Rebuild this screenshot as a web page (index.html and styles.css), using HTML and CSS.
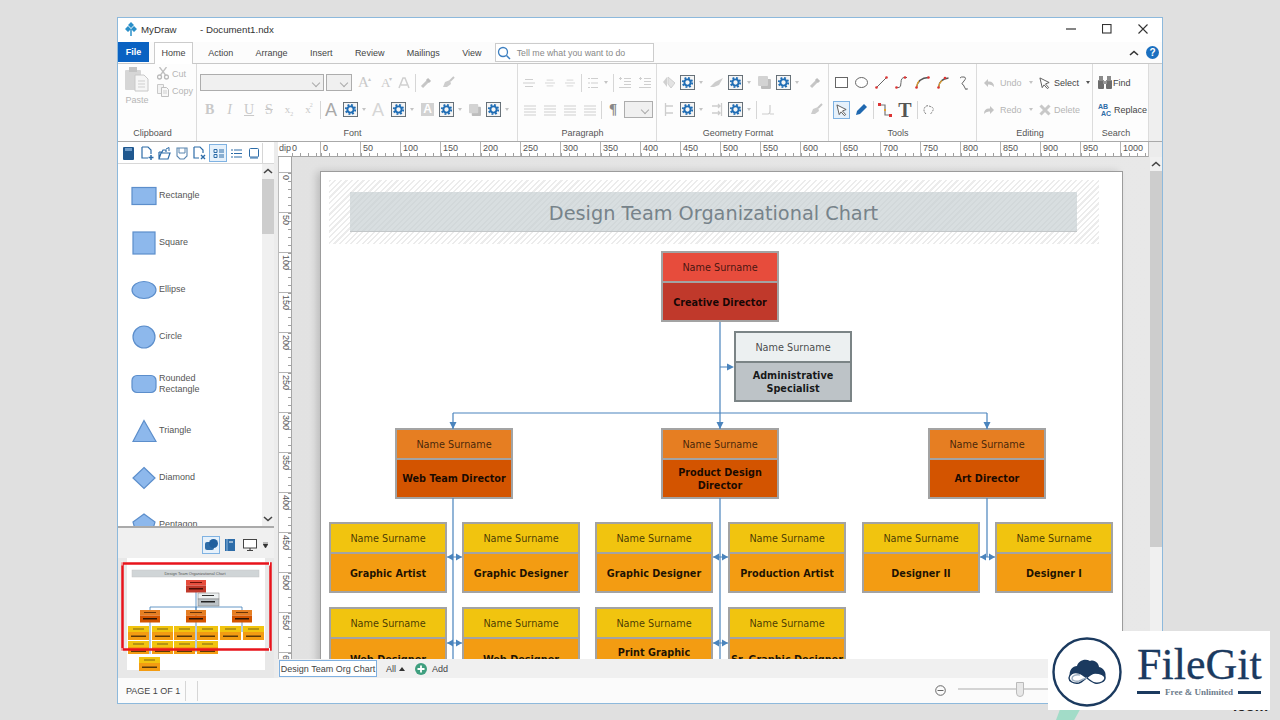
FILE: index.html
```html
<!DOCTYPE html>
<html lang="en">
<head>
<meta charset="utf-8">
<title>MyDraw - Document1.ndx</title>
<link rel="stylesheet" href="styles.css">
</head>
<body>
<svg class="defs" width="0" height="0" aria-hidden="true">
  <symbol id="gear" viewBox="0 0 16 16"><rect x=".5" y=".5" width="15" height="15" fill="#f5f5f5" stroke="#5f6a72"/><circle cx="8" cy="8" r="3.3" fill="none" stroke="#1f6db5" stroke-width="2"/><circle cx="8" cy="8" r="5" fill="none" stroke="#1f6db5" stroke-width="2" stroke-dasharray="2 1.93"/></symbol>
  <symbol id="dropper" viewBox="0 0 12 12"><path d="M2 10 8 4" stroke="#c6c6c6" stroke-width="3"/><path d="M7 2 10 5" stroke="#bdbdbd" stroke-width="3"/></symbol>
  <symbol id="brush" viewBox="0 0 13 13"><path d="M8 5 12 1" stroke="#c6c6c6" stroke-width="2"/><path d="M1 11 3 6 8 4 9 8 5 11Z" fill="#cdcdcd"/></symbol>
  <symbol id="lines3" viewBox="0 0 12 12"><path d="M0 2h12M0 5h12M0 8h12M0 11h12" stroke="#cfcfcf" stroke-width="1"/></symbol>
  <symbol id="lines2" viewBox="0 0 12 10"><path d="M2 1.5h8M0 5h12M2 8.500h8" stroke="#cfcfcf"/></symbol>
  <symbol id="indent" viewBox="0 0 12 12"><path d="M5 1.500h7M5 4.500h7M5 7.500h7M0 10.500h12M0 1.500h3M1.500 0v3" stroke="#cfcfcf"/></symbol>
  <symbol id="sq" viewBox="0 0 13 13"><rect x="3" y="3" width="10" height="10" rx="1" fill="#bdbdbd"/><rect width="10" height="10" rx="1" fill="#d3d3d3"/></symbol>
  <symbol id="ptr" viewBox="0 0 13 13"><path d="M1 1 11 6 7 7.500 10.500 11.500 9 12.500 5.500 8.500 3.500 11.500Z" fill="#fff" stroke="#555"/></symbol>
</svg>

<div class="window">
  <header class="titlebar">
    <svg class="app-logo" width="12" height="14" viewBox="0 0 12 14"><path d="M6 0 9 3 6 6 3 3ZM3 4 6 7 3 10 0 7ZM9 4 12 7 9 10 6 7Z" fill="#2a8fc9"/><path d="M6 7v7" stroke="#2a8fc9" stroke-width="1.500"/></svg>
    <span class="app-name">MyDraw</span>
    <span class="doc-name">- Document1.ndx</span>
    <div class="win-ctrls">
      <svg width="10" height="10" viewBox="0 0 10 10"><path d="M0 5h10" stroke="#333" stroke-width="1.200"/></svg>
      <svg width="10" height="10" viewBox="0 0 10 10"><rect x=".5" y=".5" width="8.500" height="8.500" fill="none" stroke="#333" stroke-width="1.100"/></svg>
      <svg width="10" height="10" viewBox="0 0 10 10"><path d="M.5.500 9.500 9.500M9.500.5.500 9.500" stroke="#333" stroke-width="1.100"/></svg>
    </div>
  </header>

  <nav class="tabs">
    <span class="file-tab">File</span>
    <span class="tab tab-home">Home</span>
    <span class="tab">Action</span>
    <span class="tab">Arrange</span>
    <span class="tab">Insert</span>
    <span class="tab">Review</span>
    <span class="tab">Mailings</span>
    <span class="tab">View</span>
    <div class="tellme">
      <svg width="14" height="14" viewBox="0 0 14 14"><circle cx="6" cy="6" r="4.500" fill="none" stroke="#3d7fc0" stroke-width="1.300"/><path d="M9.500 9.500 13 13" stroke="#3d7fc0" stroke-width="1.500"/></svg>
      <span>Tell me what you want to do</span>
    </div>
    <div class="tabs-right">
      <svg width="10" height="6" viewBox="0 0 10 6"><path d="M1 5 5 1.500 9 5" fill="none" stroke="#333" stroke-width="1.600"/></svg>
      <span class="help">?</span>
    </div>
  </nav>

  <section class="ribbon">
    <div class="group g-clip">
      <div class="group-body clip-body">
        <div class="paste">
          <svg width="24" height="25" viewBox="0 0 24 25"><rect x="0" y="3" width="16" height="20" rx="1" fill="#d6d6d6"/><rect x="4" y="0" width="8" height="5" fill="#c4c4c4"/><path d="M10 8h9l4 4v12H10Z" fill="#f6f6f6" stroke="#c8c8c8"/><path d="M13 14h7M13 17h7M13 20h7" stroke="#cfcfcf"/></svg>
          <span>Paste</span>
        </div>
        <div class="clip-side">
          <div class="clip-row"><svg width="12" height="13" viewBox="0 0 12 13"><circle cx="2.500" cy="10" r="2" fill="none" stroke="#b9b9b9" stroke-width="1.300"/><circle cx="9.500" cy="10" r="2" fill="none" stroke="#b9b9b9" stroke-width="1.300"/><path d="M3.500 8 9.500 0M8.500 8 2.500 0" stroke="#bfbfbf" stroke-width="1.300"/></svg><span>Cut</span></div>
          <div class="clip-row"><svg width="12" height="13" viewBox="0 0 12 13"><path d="M.5.500h6v9h-6Z" fill="#f3f3f3" stroke="#c9c9c9"/><path d="M4.500 3.500h5l2 2v7h-7Z" fill="#f8f8f8" stroke="#c0c0c0"/><path d="M6 7h4M6 9h4" stroke="#cfcfcf"/></svg><span>Copy</span></div>
        </div>
      </div>
      <div class="group-label">Clipboard</div>
    </div>

    <div class="group g-font">
      <div class="group-body">
        <div class="row pad3">
          <span class="combo w124"></span><span class="combo w26 ml2"></span>
          <span class="glyph a-g ml6">A<sup>▴</sup></span>
          <span class="glyph a-s ml11">A<sup>▾</sup></span>
          <svg class="ml5" width="12" height="12" viewBox="0 0 12 12"><path d="M1 11 5 1h2l4 10M3 8h6" fill="none" stroke="#cfcfcf" stroke-width="1.500"/></svg>
          <span class="sep ml5"></span>
          <svg class="ml4" width="12" height="12"><use href="#dropper"/></svg>
          <svg class="ml10" width="13" height="13"><use href="#brush"/></svg>
        </div>
        <div class="row pad3">
          <b class="glyph fmt w9 ml5">B</b>
          <i class="glyph fmt w7 ml12">I</i>
          <u class="glyph fmt w9 ml11">U</u>
          <s class="glyph fmt w10 ml11">S</s>
          <span class="glyph fmt-x w10 ml10">x<sub>2</sub></span>
          <span class="glyph fmt-x w10 ml10">x<sup>2</sup></span>
          <span class="sep ml6"></span>
          <span class="glyph big-a w12 ml4">A</span>
          <svg class="ml6" width="15" height="15"><use href="#gear"/></svg><span class="caret ml4"></span>
          <span class="glyph big-a pale w12 ml6">A</span>
          <svg class="ml7" width="15" height="15"><use href="#gear"/></svg><span class="caret ml4"></span>
          <span class="glyph boxed-a w13 ml7">A</span>
          <svg class="ml5" width="15" height="15"><use href="#gear"/></svg><span class="caret ml4"></span>
          <svg class="ml7" width="12" height="12"><use href="#sq"/></svg>
          <svg class="ml5" width="15" height="15"><use href="#gear"/></svg><span class="caret ml4"></span>
        </div>
      </div>
      <div class="group-label">Font</div>
    </div>

    <div class="group g-para">
      <div class="group-body">
        <div class="row pad5">
          <svg width="12" height="10"><use href="#lines2"/></svg>
          <svg class="ml10" width="10" height="10"><use href="#lines2"/></svg>
          <svg class="ml10" width="10" height="10"><use href="#lines2"/></svg>
          <span class="sep ml6"></span>
          <svg class="ml6" width="10" height="12" viewBox="0 0 10 12"><path d="M3 1.500h7M3 6h7M3 10.500h7M0 1.500h2M0 6h2M0 10.500h2" stroke="#cfcfcf"/></svg>
          <span class="caret ml6"></span>
          <span class="sep ml5"></span>
          <svg class="ml5" width="12" height="12"><use href="#indent"/></svg>
          <svg class="ml8" width="12" height="12"><use href="#indent"/></svg>
        </div>
        <div class="row pad5">
          <svg class="ml1" width="12" height="12"><use href="#lines3"/></svg>
          <svg class="ml8" width="12" height="12"><use href="#lines3"/></svg>
          <svg class="ml8" width="12" height="12"><use href="#lines3"/></svg>
          <svg class="ml8" width="12" height="12"><use href="#lines3"/></svg>
          <span class="sep ml5"></span>
          <b class="glyph pilcrow w8 ml7">¶</b>
          <span class="combo w29 ml7"></span>
        </div>
      </div>
      <div class="group-label">Paragraph</div>
    </div>

    <div class="group g-geom">
      <div class="group-body">
        <div class="row pad6">
          <svg width="12" height="13" viewBox="0 0 12 13"><path d="M4 1 0 6 4 11Z" fill="#d0d0d0"/><path d="M5 1 12 7 8 12 5 8Z" fill="#e3e3e3" stroke="#cfcfcf"/></svg>
          <svg class="ml5" width="15" height="15"><use href="#gear"/></svg><span class="caret ml4"></span>
          <svg class="ml7" width="13" height="12" viewBox="0 0 13 12"><path d="M0 10 5 5 13 1 9 8 4 10Z" fill="#cdcdcd"/></svg>
          <svg class="ml5" width="15" height="15"><use href="#gear"/></svg><span class="caret ml4"></span>
          <svg class="ml7" width="13" height="13"><use href="#sq"/></svg>
          <svg class="ml5" width="15" height="15"><use href="#gear"/></svg><span class="caret ml4"></span>
          <svg class="ml10" width="12" height="12"><use href="#dropper"/></svg>
        </div>
        <div class="row pad6">
          <svg class="ml1" width="11" height="13" viewBox="0 0 11 13"><path d="M1.500 0v13M1.500 3H9M1.500 10H9" stroke="#cdcdcd" stroke-width="1.300"/></svg>
          <svg class="ml5" width="15" height="15"><use href="#gear"/></svg><span class="caret ml4"></span>
          <svg class="ml9" width="11" height="13" viewBox="0 0 11 13"><path d="M9.500 0v13M0 3h8M0 10h8M6 1l2 2-2 2M6 8l2 2-2 2" fill="none" stroke="#cdcdcd" stroke-width="1.300"/></svg>
          <svg class="ml5" width="15" height="15"><use href="#gear"/></svg><span class="caret ml4"></span>
          <span class="sep ml5"></span>
          <svg class="ml5" width="12" height="12" viewBox="0 0 12 12"><path d="M0 10h6Q8 10 8 7V1M8 10h4" fill="none" stroke="#cdcdcd" stroke-width="1.200"/></svg>
          <svg class="ml36" width="13" height="13"><use href="#brush"/></svg>
        </div>
      </div>
      <div class="group-label">Geometry Format</div>
    </div>

    <div class="group g-tools">
      <div class="group-body">
        <div class="row pad6">
          <svg width="13" height="11" viewBox="0 0 13 11"><rect x=".5" y=".5" width="12" height="10" fill="#fff" stroke="#666"/></svg>
          <svg class="ml7" width="13" height="11" viewBox="0 0 13 11"><ellipse cx="6.500" cy="5.500" rx="6" ry="5" fill="#fff" stroke="#666"/></svg>
          <svg class="ml7" width="13" height="13" viewBox="0 0 13 13"><path d="M1.500 11.500 11.500 1.500" stroke="#666"/><circle cx="1.500" cy="11.500" r="1.300" fill="#d33"/><circle cx="11.500" cy="1.500" r="1.300" fill="#d33"/></svg>
          <svg class="ml7" width="13" height="13" viewBox="0 0 13 13"><path d="M1.500 11.500H4Q6 11.500 6 6.500T9.500 1.500H12" fill="none" stroke="#666"/><circle cx="1.500" cy="11.500" r="1.300" fill="#d33"/><circle cx="10" cy="1.500" r="1.300" fill="#d33"/></svg>
          <svg class="ml7" width="15" height="13" viewBox="0 0 15 13"><path d="M1.500 11.500Q3 2 13.500 1.500" fill="none" stroke="#555" stroke-width="1.300"/><path d="M1.500 11.500Q2 7 4 5" fill="none" stroke="#e0a030" stroke-width="1.300"/><circle cx="1.500" cy="11.500" r="1.300" fill="#d33"/><circle cx="13.500" cy="1.500" r="1.300" fill="#d33"/></svg>
          <svg class="ml7" width="13" height="13" viewBox="0 0 13 13"><path d="M1.500 11.500Q2 3 11.500 2" fill="none" stroke="#555" stroke-width="1.300"/><path d="M1.500 11.500Q2 7 5 4.500" fill="none" stroke="#e0a030" stroke-width="1.300"/><circle cx="1.500" cy="11.500" r="1.300" fill="#d33"/><circle cx="8" cy="2" r="1.300" fill="#d33"/></svg>
          <svg class="ml9" width="9" height="14" viewBox="0 0 9 14"><path d="M1 2Q2 .5 5 1T5 5 3 8 6 12 8 12" fill="none" stroke="#666"/></svg>
        </div>
        <div class="row pad4">
          <span class="selbox w17"><svg width="12" height="12"><use href="#ptr"/></svg></span>
          <svg class="ml5" width="13" height="13" viewBox="0 0 13 13"><path d="M1 12 2 8 9 1 12 4 5 11Z" fill="#1f68b0"/></svg>
          <span class="sep ml5"></span>
          <svg class="ml4" width="14" height="14" viewBox="0 0 14 14"><path d="M2 2H7V12H12" fill="none" stroke="#777" stroke-width="1.200"/><rect x="0" y="0" width="3" height="3" fill="#d33"/><rect x="11" y="11" width="3" height="3" fill="#d33"/><rect x="6" y="6" width="2" height="2" fill="#e0a030"/></svg>
          <span class="glyph big-t w14 ml6">T</span>
          <span class="sep ml5"></span>
          <svg class="ml5" width="11" height="10" viewBox="0 0 11 10"><path d="M3 9Q0 6 1.500 3T6 1 10 3 9 7 7 9" fill="none" stroke="#777" stroke-dasharray="2 1"/></svg>
        </div>
      </div>
      <div class="group-label">Tools</div>
    </div>

    <div class="group g-edit">
      <div class="group-body">
        <div class="row pad6">
          <svg width="12" height="10" viewBox="0 0 12 10"><path d="M1 5 5 1V3.500Q11 3 11 9 9 6 5 6.500V9Z" fill="#c4c4c4"/></svg>
          <span class="ed-label pale-text ml5">Undo</span><span class="caret"></span>
          <svg class="ml6" width="12" height="12"><use href="#ptr"/></svg>
          <span class="ed-select ml3">Select</span><span class="caret dark ml5"></span>
        </div>
        <div class="row pad6">
          <svg width="12" height="10" viewBox="0 0 12 10"><path d="M11 5 7 1V3.500Q1 3 1 9 3 6 7 6.500V9Z" fill="#c4c4c4"/></svg>
          <span class="ed-label pale-text ml5">Redo</span><span class="caret"></span>
          <svg class="ml6" width="12" height="12" viewBox="0 0 12 12"><path d="M1.500 1.500 10.500 10.500M10.500 1.500 1.500 10.500" stroke="#c8c8c8" stroke-width="3"/></svg>
          <span class="ed-select pale-text ml3">Delete</span>
        </div>
      </div>
      <div class="group-label">Editing</div>
    </div>

    <div class="group g-search">
      <div class="group-body">
        <div class="row pad5">
          <svg width="14" height="13" viewBox="0 0 14 13"><rect x="0" y="4" width="6" height="9" rx="1" fill="#6d6d6d"/><rect x="8" y="4" width="6" height="9" rx="1" fill="#6d6d6d"/><rect x="1" y="0" width="4" height="5" fill="#8a8a8a"/><rect x="9" y="0" width="4" height="5" fill="#8a8a8a"/><rect x="5" y="5" width="4" height="3" fill="#999"/></svg>
          <span class="ml1 search-t">Find</span>
        </div>
        <div class="row pad5">
          <span class="abac"><span>AB</span><span class="abac2">AC</span></span>
          <span class="ml2 search-t">Replace</span>
        </div>
      </div>
      <div class="group-label">Search</div>
    </div>
    <div class="ribbon-end"></div>
  </section>

  <main class="body">
    <aside class="left">
      <div class="left-tools">
        <svg width="11" height="13" viewBox="0 0 11 13"><rect width="11" height="13" rx="1" fill="#20588f"/><rect x="2" y="1" width="7" height="3" fill="#6f9cc8"/></svg>
        <svg class="ml7" width="13" height="14" viewBox="0 0 13 14"><path d="M1 1h6l3 3v4M1 1v11h6" fill="none" stroke="#2d6ca8" stroke-width="1.200"/><path d="M10 9v5M7.500 11.500h5" stroke="#2d6ca8" stroke-width="1.500"/></svg>
        <svg class="ml4" width="13" height="13" viewBox="0 0 13 13"><path d="M1 5V12H10L12 6H3L1 12M1 5H4L5 3H8V5" fill="none" stroke="#2d6ca8" stroke-width="1.200"/><path d="M8 2 11 .5V4" fill="none" stroke="#2d6ca8"/></svg>
        <svg class="ml5" width="12" height="13" viewBox="0 0 12 13"><path d="M1 1h10v8l-3 3H4L1 9Z" fill="none" stroke="#5a86b0" stroke-width="1.100"/><path d="M3 1v5h6V1" fill="none" stroke="#5a86b0"/></svg>
        <svg class="ml5" width="13" height="14" viewBox="0 0 13 14"><path d="M1 1h6l3 3v3M1 1v11h5" fill="none" stroke="#2d6ca8" stroke-width="1.200"/><path d="M8 9l4 4M12 9l-4 4" stroke="#2d6ca8" stroke-width="1.400"/></svg>
        <span class="selbox w18 ml3"><svg width="11" height="11" viewBox="0 0 11 11"><path d="M1 1.500h3v3H1ZM1 6.500h3v3H1Z" fill="none" stroke="#2d6ca8"/><path d="M6 2h5M6 4h5M6 7h5M6 9h5" stroke="#2d6ca8"/></svg></span>
        <svg class="ml4" width="11" height="9" viewBox="0 0 11 9"><path d="M3 1h8M3 4.500h8M3 8h8M0 1h2M0 4.500h2M0 8h2" stroke="#2d6ca8"/></svg>
        <svg class="ml7" width="10" height="11" viewBox="0 0 10 11"><rect x=".5" y=".5" width="9" height="8.500" rx="1" fill="none" stroke="#2d6ca8"/><path d="M1 10h8" stroke="#2d6ca8"/></svg>
        <span class="sep ml3 tall"></span>
      </div>
      <div class="shapes">
        <ul class="shape-list">
          <li><svg width="26" height="24" viewBox="0 0 26 24"><rect x="1" y="3.500" width="24" height="17" class="shape"/></svg><span>Rectangle</span></li>
          <li><svg width="26" height="24" viewBox="0 0 26 24"><rect x="2" y="1" width="22" height="22" class="shape"/></svg><span>Square</span></li>
          <li><svg width="26" height="24" viewBox="0 0 26 24"><ellipse cx="13" cy="12" rx="12" ry="8.500" class="shape"/></svg><span>Ellipse</span></li>
          <li><svg width="26" height="24" viewBox="0 0 26 24"><circle cx="13" cy="12" r="11" class="shape"/></svg><span>Circle</span></li>
          <li><svg width="26" height="24" viewBox="0 0 26 24"><rect x="1" y="3.500" width="24" height="17" rx="5" class="shape"/></svg><span>Rounded<br>Rectangle</span></li>
          <li><svg width="26" height="24" viewBox="0 0 26 24"><path d="M13 1.500 25 22.500H2Z" class="shape"/></svg><span>Triangle</span></li>
          <li><svg width="26" height="24" viewBox="0 0 26 24"><path d="M13 1.500 24 12 13 22.500 2 12Z" class="shape"/></svg><span>Diamond</span></li>
          <li><svg width="26" height="24" viewBox="0 0 26 24"><path d="M13 1 24 9 20 23H6L2 9Z" class="shape"/></svg><span>Pentagon</span></li>
        </ul>
        <div class="sb-v">
          <svg width="10" height="6" viewBox="0 0 10 6"><path d="M1 5 5 1.500 9 5" fill="none" stroke="#444" stroke-width="1.600"/></svg>
          <div class="sb-thumb"></div>
          <svg class="sb-down" width="10" height="6" viewBox="0 0 10 6"><path d="M1 1 5 4.500 9 1" fill="none" stroke="#444" stroke-width="1.600"/></svg>
        </div>
      </div>
      <div class="nav-tools">
        <span class="selbox w18"><svg width="13" height="12" viewBox="0 0 13 12"><rect x="0" y="3" width="9" height="8" rx="2" fill="#2d6ca8"/><circle cx="8.500" cy="4.500" r="4.500" fill="#1f5f9e"/></svg></span>
        <svg class="ml5" width="10" height="12" viewBox="0 0 10 12"><rect width="10" height="12" fill="#2d6ca8"/><path d="M2 0v12" stroke="#8db8e0"/><path d="M4 3h4" stroke="#fff"/></svg>
        <svg class="ml8" width="14" height="12" viewBox="0 0 14 12"><rect x=".5" y=".5" width="13" height="8.500" fill="#fff" stroke="#444"/><path d="M7 9v2M4 11.500h6" stroke="#444" stroke-width="1.200"/></svg>
        <svg class="ml6" width="5" height="6" viewBox="0 0 5 6"><path d="M0 0h5M0 2h5L2.500 6Z" fill="#333" stroke="#333" stroke-width=".6"/></svg>
      </div>
      <svg class="thumb" width="156" height="120" viewBox="118 558 156 120">
        <defs>
          <g id="mn-y"><rect width="21" height="6" fill="#f1c40f"/><rect y="6" width="21" height="8" fill="#f39c12"/><rect x="5" y="2.500" width="11" height="1" fill="#7a6516"/><rect x="3" y="9.500" width="15" height="1.500" fill="#5a3808"/></g>
          <g id="mn-o"><rect width="20" height="5.500" fill="#e67e22"/><rect y="5.500" width="20" height="7" fill="#d35400"/><rect x="4" y="2" width="12" height="1" fill="#6a3508"/><rect x="3" y="8" width="14" height="1.500" fill="#2d1405"/></g>
        </defs>
        <rect x="127" y="558" width="138" height="112" fill="#fff"/>
        <rect x="132" y="570" width="127" height="7" fill="#d0d5d7" stroke="#c5c5c5" stroke-width=".5"/>
        <text x="195" y="575" class="mini-title" text-anchor="middle">Design Team Organizational Chart</text>
        <path d="M196 592V620M150 607H242V610M150 607V610M196 607V610M150 622V657M196 622V652M242 622V632" fill="none" stroke="#3f7fb8" stroke-width=".8"/>
        <rect x="186" y="580" width="20" height="5.500" fill="#e74c3c"/><rect x="186" y="585.500" width="20" height="7" fill="#c0392b"/><rect x="190" y="582" width="12" height="1" fill="#6b1208"/><rect x="189" y="588" width="14" height="1.500" fill="#4a0d05"/>
        <rect x="198" y="593" width="21" height="6" fill="#ecf0f1" stroke="#777" stroke-width=".5"/><rect x="198" y="599" width="21" height="7" fill="#bdc3c7" stroke="#777" stroke-width=".5"/><rect x="202" y="595" width="12" height="1" fill="#333"/><rect x="201" y="601" width="14" height="1.500" fill="#222"/>
        <use href="#mn-o" x="140" y="610"/><use href="#mn-o" x="186" y="610"/><use href="#mn-o" x="232" y="610"/>
        <use href="#mn-y" x="128" y="626"/><use href="#mn-y" x="152" y="626"/><use href="#mn-y" x="174" y="626"/><use href="#mn-y" x="197" y="626"/><use href="#mn-y" x="220" y="626"/><use href="#mn-y" x="243" y="626"/>
        <use href="#mn-y" x="128" y="641"/><use href="#mn-y" x="152" y="641"/><use href="#mn-y" x="174" y="641"/><use href="#mn-y" x="197" y="641"/>
        <use href="#mn-y" x="139" y="657"/>
        <rect x="127" y="654" width="138" height="3" fill="#fff"/>
        <rect x="122.500" y="563.500" width="148" height="86" fill="none" stroke="#e8141c" stroke-width="2.500"/>
        <path d="M122 561.500v4M269.500 561.500v4M122 648v4M269.500 648v4" stroke="#fff" stroke-width="1"/>
      </svg>
    </aside>

    <div class="right">
      <div class="hruler">
        <span class="dip">dip</span>
        <div class="hcells">
          <span class="hfirst">0</span><span>0</span><span>50</span><span>100</span><span>150</span><span>200</span><span>250</span><span>300</span><span>350</span><span>400</span><span>450</span><span>500</span><span>550</span><span>600</span><span>650</span><span>700</span><span>750</span><span>800</span><span>850</span><span>900</span><span>950</span><span>1000</span>
        </div>
      </div>
      <div class="mid">
        <div class="vruler">
          <span class="vfirst"></span><span>0</span><span>50</span><span>100</span><span>150</span><span>200</span><span>250</span><span>300</span><span>350</span><span>400</span><span>450</span><span>500</span><span>550</span><span>600</span>
        </div>
        <div class="canvas">
          <div class="page">
            <div class="banner"><div class="banner-in">Design Team Organizational Chart</div></div>

            <svg class="wires" width="802" height="520" viewBox="0 0 802 520">
              <path d="M399 150V257M399 195H411M132 241H666M132 241V257M666 241V257M132 326V500M399 326V500M666 326V385M126 385H141M392 385H407M659 385H674M126 471H141M392 471H407" fill="none" stroke="#4a84bd" stroke-width="1.200"/>
              <path d="M399 257l-3.500-7h7ZM132 257l-3.500-7h7ZM666 257l-3.500-7h7ZM413 195l-7-3.500v7ZM126 385l6-3.500v7ZM141 385l-6-3.500v7ZM392 385l6-3.500v7ZM407 385l-6-3.500v7ZM659 385l6-3.500v7ZM674 385l-6-3.500v7ZM126 471l6-3.500v7ZM141 471l-6-3.500v7ZM392 471l6-3.500v7ZM407 471l-6-3.500v7Z" fill="#4a84bd"/>
            </svg>

            <div class="node red n1"><div class="nh">Name Surname</div><div class="nb">Creative Director</div></div>
            <div class="node grey n2"><div class="nh">Name Surname</div><div class="nb">Administrative<br>Specialist</div></div>

            <div class="node orange d1"><div class="nh">Name Surname</div><div class="nb">Web Team Director</div></div>
            <div class="node orange d2"><div class="nh">Name Surname</div><div class="nb">Product Design<br>Director</div></div>
            <div class="node orange d3"><div class="nh">Name Surname</div><div class="nb">Art Director</div></div>

            <div class="node yellow r1 c1"><div class="nh">Name Surname</div><div class="nb">Graphic Artist</div></div>
            <div class="node yellow r1 c2"><div class="nh">Name Surname</div><div class="nb">Graphic Designer</div></div>
            <div class="node yellow r1 c3"><div class="nh">Name Surname</div><div class="nb">Graphic Designer</div></div>
            <div class="node yellow r1 c4"><div class="nh">Name Surname</div><div class="nb">Production Artist</div></div>
            <div class="node yellow r1 c5"><div class="nh">Name Surname</div><div class="nb">Designer II</div></div>
            <div class="node yellow r1 c6"><div class="nh">Name Surname</div><div class="nb">Designer I</div></div>

            <div class="node yellow r2 c1"><div class="nh">Name Surname</div><div class="nb">Web Designer</div></div>
            <div class="node yellow r2 c2"><div class="nh">Name Surname</div><div class="nb">Web Designer</div></div>
            <div class="node yellow r2 c3"><div class="nh">Name Surname</div><div class="nb">Print Graphic<br>Designer</div></div>
            <div class="node yellow r2 c4"><div class="nh">Name Surname</div><div class="nb">Sr. Graphic Designer</div></div>
          </div>
        </div>
        <div class="sb-main">
          <svg width="10" height="6" viewBox="0 0 10 6"><path d="M1 5 5 1.500 9 5" fill="none" stroke="#444" stroke-width="1.600"/></svg>
          <div class="sb-main-thumb"></div>
        </div>
      </div>
      <div class="sheet-tabs">
        <span class="sheet">Design Team Org Chart</span>
        <span class="all">All</span><span class="caret up"></span>
        <svg class="add-ico" width="12" height="12" viewBox="0 0 12 12"><circle cx="6" cy="6" r="6" fill="#3f9f7f"/><path d="M6 2.500v7M2.500 6h7" stroke="#fff" stroke-width="1.800"/></svg>
        <span class="add">Add</span>
      </div>
    </div>
  </main>

  <footer class="status">
    <span class="page-of">PAGE 1 OF 1</span>
    <span class="sep tall ml5"></span>
    <span class="sep tall ml11"></span>
    <svg class="zoom-minus" width="11" height="11" viewBox="0 0 11 11"><circle cx="5.500" cy="5.500" r="4.800" fill="none" stroke="#666"/><path d="M2.500 5.500h6" stroke="#666"/></svg>
    <div class="slider"><span class="slider-thumb"></span></div>
  </footer>
</div>

<div class="peek-green"></div>
<span class="peek-text">.com</span>
<div class="filegit">
  <svg width="76" height="76" viewBox="0 0 76 76">
    <circle cx="38" cy="38" r="33.500" fill="#fff" stroke="#1b3a5f" stroke-width="2.400"/>
    <g class="fg-icon">
      <path d="M21 46C19 38 24 34 28 34 29 29 36 26 41 29 46 27 50 32 50 35 55 36 58 41 56 47Z" fill="#1b3a5f"/>
      <path d="M30 41C24 39 20 43 20 46S24 52 30 51C34 50 41 41 46 41S56 43 56 46 51 52 46 51C41 50 35 42 30 41Z" fill="#fff" stroke="#1b3a5f" stroke-width="1.400"/>
      <path d="M31 43C27 42 23 44 23 46.500S27 49.500 30 49C33 48 36 46 38 46" fill="none" stroke="#9fb0c2" stroke-width="1.500"/>
    </g>
  </svg>
  <div class="fg-text">
    <div class="fg-name">FileGit</div>
    <div class="fg-sub"><span class="fg-bar"></span><span>Free &amp; Unlimited</span><span class="fg-bar"></span></div>
  </div>
</div>
</body>
</html>
```
FILE: styles.css
```css
* { box-sizing: border-box; }
html, body { margin: 0; height: 100%; }
body {
  position: relative;
  width: 1280px;
  height: 720px;
  overflow: hidden;
  padding: 17px 0 0 117px;
  background: #e0e0e0;
  font: 9px "Liberation Sans", Arial, sans-serif;
  color: #444;
}
.defs { position: absolute; }
svg { display: block; flex: none; }

.window {
  width: 1046px;
  height: 687px;
  border: 1px solid #8db9dc;
  background: #fff;
  display: flex;
  flex-direction: column;
}

/* title bar */
.titlebar { height: 24px; display: flex; align-items: center; padding: 0 0 2px 7px; background: #fff; color: #333; font-size: 9.700px; }
.app-name { margin-left: 4px; width: 59px; }
.win-ctrls { margin-left: auto; display: flex; align-items: center; gap: 26px; padding-right: 14px; }

/* tabs */
.tabs { height: 22px; display: flex; align-items: flex-end; position: relative; border-bottom: 1px solid #c8c8c8; background: #fcfcfc; color: #444; }
.file-tab { width: 31px; height: 20px; margin-bottom: 1px; background: #0a62c2; color: #fff; font-weight: 700; display: flex; align-items: center; justify-content: center; }
.tab { padding: 0 11.200px 1px; height: 20px; display: flex; align-items: center; }
.tab-home { margin: 0 4px -1px 5px; padding: 0 8px 2px; width: 39px; height: 22px; justify-content: center; background: #fff; border: 1px solid #ccc; border-bottom: 0; }
.tellme { margin: 0 0 1px 2px; width: 159px; height: 19px; border: 1px solid #ccc; display: flex; align-items: center; gap: 6px; padding-left: 1px; color: #888; background: #fff; font-size: 8.800px; }
.tabs-right { margin-left: auto; display: flex; align-items: center; gap: 7px; height: 21px; padding-right: 3px; }
.help { width: 13px; height: 13px; border-radius: 50%; background: #1a6fc0; color: #fff; font-weight: 700; font-size: 10px; display: flex; align-items: center; justify-content: center; }

/* ribbon */
.ribbon { height: 78px; display: flex; border-bottom: 1px solid #a9a9a9; background: #fdfdfd; }
.group { display: flex; flex-direction: column; border-right: 1px solid #dcdcdc; }
.g-clip { width: 79px; } .g-font { width: 321px; } .g-para { width: 139px; } .g-geom { width: 172px; }
.g-tools { width: 148px; } .g-edit { width: 116px; } .g-search { width: 56px; }
.ribbon-end { flex: 1; background: #efefef; }
.group-body { height: 63px; padding-top: 5px; }
.group-label { text-align: center; color: #555; line-height: 12px; padding-right: 9px; }
.row { height: 27px; display: flex; align-items: center; }
.pad3 { padding-left: 3px; } .pad4 { padding-left: 4px; } .pad5 { padding-left: 5px; } .pad6 { padding-left: 6px; }
.sep { width: 1px; height: 18px; background: #d6d6d6; flex: none; }
.sep.tall { height: 20px; }
.caret { width: 0; height: 0; border: 2.500px solid transparent; border-top: 3px solid #c4c4c4; border-bottom: 0; flex: none; }
.caret.dark { border-top-color: #555; }
.caret.up { border-top: 0; border-bottom: 4px solid #333; border-left-width: 3px; border-right-width: 3px; margin-left: 3px; }
.combo { height: 17px; display: block; flex: none; background: #f0f0f0; border: 1px solid #adadad; position: relative; }
.combo::after { content: ""; position: absolute; right: 4px; top: 5px; width: 5px; height: 5px; border-right: 1px solid #aaa; border-bottom: 1px solid #aaa; transform: rotate(45deg); }
.w124 { width: 124px; } .w26 { width: 26px; } .w29 { width: 29px; }
.w7 { width: 7px; } .w8 { width: 8px; } .w9 { width: 9px; } .w10 { width: 10px; } .w12 { width: 12px; } .w13 { width: 13px; } .w14 { width: 14px; } .w17 { width: 17px; } .w18 { width: 18px; }
.ml1 { margin-left: 1px; } .ml2 { margin-left: 2px; } .ml3 { margin-left: 3px; } .ml4 { margin-left: 4px; } .ml5 { margin-left: 5px; } .ml6 { margin-left: 6px; } .ml7 { margin-left: 7px; } .ml8 { margin-left: 8px; } .ml9 { margin-left: 9px; } .ml10 { margin-left: 10px; } .ml11 { margin-left: 11px; } .ml12 { margin-left: 12px; } .ml36 { margin-left: 36px; }

.glyph { display: block; flex: none; font-family: "Liberation Serif", serif; color: #c9c9c9; text-align: center; text-decoration: none; line-height: 1; }
.a-g, .a-s { width: 12px; font-size: 15px; white-space: nowrap; text-align: left; }
.a-s { font-size: 13px; }
.glyph sup { font-size: 6px; vertical-align: 6px; line-height: 0; margin-left: -1px; }
.fmt { font-size: 14px; }
u.fmt { text-decoration: underline; }
s.fmt { text-decoration: line-through; }
.fmt-x { font-size: 11px; white-space: nowrap; }
.fmt-x sub, .fmt-x sup { font-size: 6px; line-height: 0; }
.big-a { font-size: 18px; font-family: "Liberation Sans", sans-serif; color: #a9a9a9; }
.big-a.pale { color: #d6d6d6; }
.boxed-a { font-size: 12px; font-weight: 700; background: #d2d2d2; color: #fff; font-family: "Liberation Sans", sans-serif; height: 13px; }
.pilcrow { font-size: 15px; color: #888; }
.big-t { font-size: 20px; font-weight: 700; color: #555; }
.selbox { height: 18px; display: flex; align-items: center; justify-content: center; flex: none; background: #e6f1fb; border: 1px solid #7fb2e2; }

.clip-body { display: flex; padding: 3px 0 0 7px; color: #b5b5b5; }
.paste { width: 24px; display: flex; flex-direction: column; align-items: center; gap: 3px; font-size: 9px; white-space: nowrap; }
.clip-side { margin-left: 8px; display: flex; flex-direction: column; gap: 4px; }
.clip-row { display: flex; align-items: center; gap: 3px; height: 13px; }
.pale-text { color: #b5b5b5; }
.ed-label { width: 29px; }
.ed-select { width: 27px; color: #444; }
.ed-select.pale-text { color: #b5b5b5; }
.search-t { color: #444; }
.abac { width: 14px; font-size: 7px; line-height: 7px; color: #2d6ca8; font-weight: 700; display: flex; flex-direction: column; }
.abac2 { padding-left: 3px; }

/* body */
.body { height: 536px; display: flex; background: #ececec; }
.left { width: 156px; display: flex; flex-direction: column; background: #e8e8e8; }
.left-tools { height: 22px; display: flex; align-items: center; padding: 1px 0 0 5px; background: #fff; border-bottom: 1px solid #d8d8d8; }
.shapes { height: 364px; display: flex; background: #fff; border-bottom: 2px solid #aaa; overflow: hidden; }
.shape-list { list-style: none; margin: 0; padding: 8px 0 0 13px; width: 144px; }
.shape-list li { height: 47px; display: flex; align-items: center; gap: 2px; line-height: 11px; color: #555; }
.shape { fill: #8db8ec; stroke: #5c8ecb; stroke-width: 1.200; }
.sb-v { width: 12px; background: #f0f0f0; position: relative; display: flex; flex-direction: column; align-items: center; padding-top: 4px; }
.sb-thumb { width: 12px; height: 55px; margin-top: 5px; background: #cdcdcd; }
.sb-down { margin-top: auto; margin-bottom: 4px; }
.nav-tools { height: 30px; display: flex; align-items: center; padding: 3px 0 0 84px; background: #f0f0f0; }
.thumb { flex: none; }
.mini-title { font: 4px "Liberation Sans", sans-serif; fill: #555; }

.right { width: 888px; padding-left: 4px; display: flex; flex-direction: column; }
.hruler { height: 15px; width: 871px; display: flex; background: #fff; border-bottom: 1px solid #a5a5a5; border-right: 1px solid #bbb; overflow: hidden; color: #555; }
.dip { width: 14px; line-height: 12px; flex: none; padding-left: 1px; }
.hcells { display: flex; }
.hcells span { width: 40px; flex: none; height: 14px; padding-left: 2px; line-height: 12px; border-left: 1px solid #b5b5b5; background: repeating-linear-gradient(90deg, #a0a0a0 0 1px, transparent 1px 8px) left bottom / 100% 3px no-repeat; }
.hcells .hfirst { width: 28px; border-left: 0; padding-left: 0; }
.mid { height: 502px; display: flex; }
.vruler { width: 14px; display: flex; flex-direction: column; background: #fff; border-left: 1px solid #bbb; border-right: 1px solid #a5a5a5; overflow: hidden; color: #555; }
.vruler span { height: 40px; flex: none; writing-mode: vertical-rl; padding-top: 2px; line-height: 11px; border-top: 1px solid #b5b5b5; background: repeating-linear-gradient(180deg, #a0a0a0 0 1px, transparent 1px 8px) right top / 3px 100% no-repeat; }
.vruler .vfirst { height: 15px; border-top: 0; background: #fff; flex: none; }
.canvas { width: 858px; height: 502px; background: linear-gradient(90deg, #e2e2e2, #e8e8e8); overflow: hidden; }
.page { position: relative; width: 801px; height: 600px; margin: 15px 0 0 29px; background: #fff; box-shadow: 0 0 0 1px #9c9c9c, -4px 0 8px rgba(0,0,0,.18); }
.sb-main { width: 12px; background: #f0f0f0; display: flex; flex-direction: column; align-items: center; padding-top: 4px; }
.sb-main-thumb { width: 12px; height: 376px; margin-top: 4px; background: #cdcdcd; }

/* diagram */
.banner { position: absolute; left: 8px; top: 8px; width: 770px; height: 64px; padding: 12px 22px 12px 21px; background: repeating-linear-gradient(135deg, #ececec 0 1.500px, #fff 1.500px 4px); }
.banner-in { height: 40px; padding-top: 3px; display: flex; align-items: center; justify-content: center; font: 19.300px "DejaVu Sans", Verdana, sans-serif; color: #77838a; background: repeating-linear-gradient(135deg, #d2d8da 0 1.500px, #d8dee0 1.500px 4px); border-bottom: 1px solid #c3c7c9; }
.wires { position: absolute; left: 0; top: 0; z-index: 2; }
.node { position: absolute; width: 118px; height: 71px; display: flex; flex-direction: column; border: 2px solid #a3a3a3; font: 9.700px/13px "DejaVu Sans", Verdana, sans-serif; text-align: center; }
.nh { height: 30px; flex: none; display: flex; align-items: center; justify-content: center; border-bottom: 2px solid #a3a3a3; color: rgba(0,0,0,.72); }
.nb { flex: 1; display: flex; align-items: center; justify-content: center; font-weight: 700; color: rgba(0,0,0,.88); }
.n1 .nb, .r1 .nb { padding-top: 2px; }
.r2 .nb { padding-top: 3px; }
.red .nh { background: #e74c3c; } .red .nb { background: #c0392b; }
.grey { border-color: #7b8486; } .grey .nh { background: #ecf0f1; border-color: #7b8486; } .grey .nb { background: #bdc3c7; }
.orange .nh { background: #e67e22; } .orange .nb { background: #d35400; }
.yellow .nh { background: #f1c40f; } .yellow .nb { background: #f39c12; }
.n1 { left: 340px; top: 79px; }
.n2 { left: 413px; top: 159px; }
.d1, .d2, .d3 { top: 256px; }
.d1 { left: 74px; } .d2 { left: 340px; } .d3 { left: 607px; }
.r1 { top: 350px; } .r2 { top: 435px; }
.c1 { left: 8px; } .c2 { left: 141px; } .c3 { left: 274px; } .c4 { left: 407px; } .c5 { left: 541px; } .c6 { left: 674px; }

/* sheet tabs + status */
.sheet-tabs { height: 19px; display: flex; align-items: center; background: #f0f0f0; }
.sheet { width: 98px; height: 17px; margin-left: 1px; background: #fff; border: 1px solid #7fb0e0; display: flex; align-items: center; justify-content: center; white-space: nowrap; color: #444; }
.all { margin-left: 9px; }
.add-ico { margin-left: 10px; }
.add { margin-left: 5px; }
.status { height: 25px; display: flex; align-items: center; padding-left: 8px; background: #fbfbfb; color: #444; }
.zoom-minus { margin-left: auto; }
.slider { position: relative; margin-left: 12px; width: 204px; height: 20px; background: linear-gradient(#d4d4d4, #d4d4d4) left 7px / 100% 2px no-repeat; }
.slider-thumb { position: absolute; left: 58px; top: 1px; width: 8px; height: 15px; background: #e8e8e8; border: 1px solid #bbb; border-radius: 0 0 4px 4px; }

/* watermark */
.peek-green { position: absolute; left: 1056px; top: 706px; width: 26px; height: 14px; background: #a2dcc8; clip-path: polygon(20% 0, 100% 0, 70% 100%, 0 100%); }
.peek-text { position: absolute; left: 1233px; top: 697px; font: 700 15px "Liberation Sans", sans-serif; color: #222; }
.filegit { position: absolute; left: 1048px; top: 631px; width: 222px; height: 79px; background: #fff; display: flex; padding: 3px 0 0 1px; color: #1b3a5f; }
.fg-icon { transform: translateY(-2px); }
.fg-text { margin-left: 12px; width: 124px; }
.fg-name { font: 44px/46px "Liberation Serif", serif; margin-top: 8px; white-space: nowrap; -webkit-text-stroke: .3px #1b3a5f; }
.fg-sub { display: flex; align-items: center; justify-content: space-between; font: 700 9px "Liberation Serif", serif; color: #6d7c8c; margin-top: -1px; white-space: nowrap; }
.fg-bar { width: 23px; height: 3px; background: #1b3a5f; }
```
